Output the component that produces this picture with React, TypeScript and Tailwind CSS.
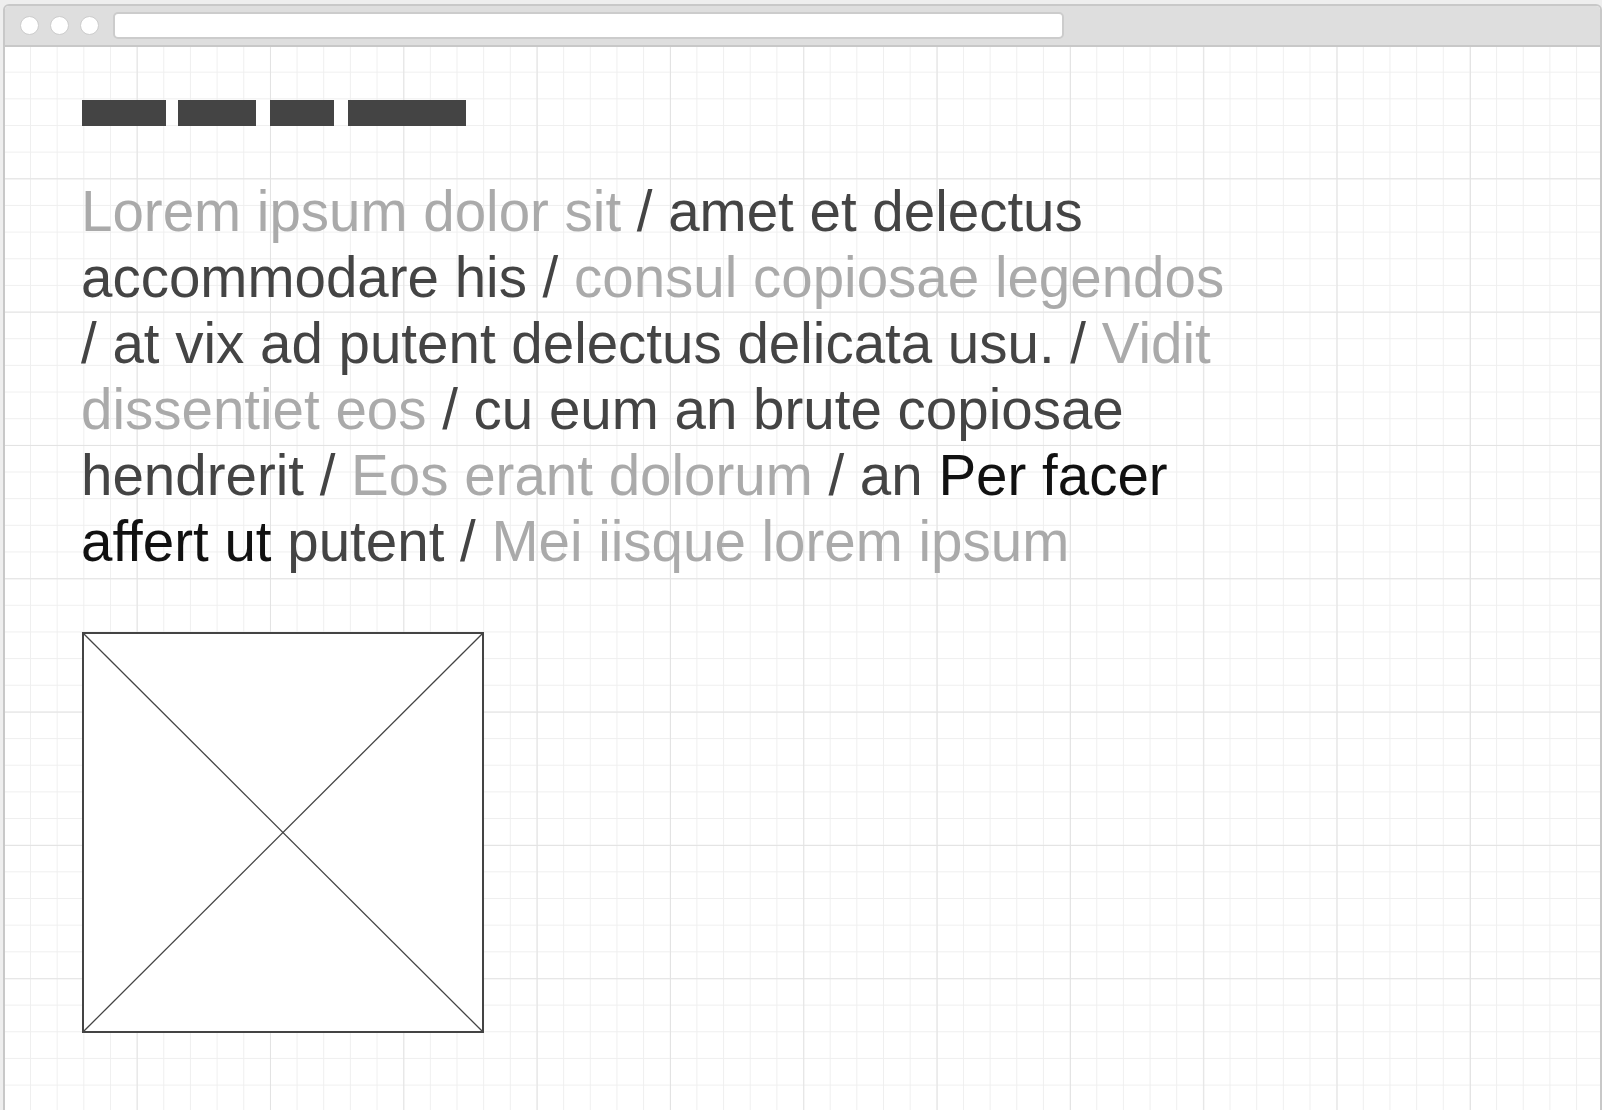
import React from "react";

const Gray = ({ children }: { children: React.ReactNode }) => (
  <span className="text-[#aaaaaa]">{children}</span>
);
const Dark = ({ children }: { children: React.ReactNode }) => (
  <span className="text-[#444444]">{children}</span>
);
const Black = ({ children }: { children: React.ReactNode }) => (
  <span className="text-[#111111]">{children}</span>
);

export default function App() {
  return (
    <div className="w-full h-[1110px] bg-[#eeeeee] pt-[4px] pl-[3px] overflow-hidden font-['Liberation_Sans',Arial,sans-serif]">
      <div className="h-[1120px] border-2 border-[#c8c8c8] rounded-t-[6px] bg-white flex flex-col overflow-hidden">
        {/* title bar */}
        <div className="h-[41px] shrink-0 bg-[#dedede] border-b-2 border-[#c8c8c8] flex items-center pl-[15px] gap-[11px]">
          <div className="w-[19px] h-[19px] rounded-full bg-white border border-[#cccccc]" />
          <div className="w-[19px] h-[19px] rounded-full bg-white border border-[#cccccc]" />
          <div className="w-[19px] h-[19px] rounded-full bg-white border border-[#cccccc]" />
          <div className="ml-[3px] w-[951px] h-[27px] rounded-[5px] bg-white border-2 border-[#cccccc]" />
        </div>
        {/* content */}
        <div className="flex-1 pt-[53px] pl-[77px] bg-white bg-[linear-gradient(to_right,#e3e3e3_1.3px,transparent_1.3px),linear-gradient(to_bottom,#e3e3e3_1.3px,transparent_1.3px),linear-gradient(to_right,#efefef_1.3px,transparent_1.3px),linear-gradient(to_bottom,#efefef_1.3px,transparent_1.3px)] bg-[size:133.333px_133.333px,133.333px_133.333px,26.667px_26.667px,26.667px_26.667px] bg-[position:-1.67px_-2px]">
          <div className="flex items-start h-[26px]">
            <div className="w-[84px] h-[26px] bg-[#444444]" />
            <div className="ml-[12px] w-[78px] h-[26px] bg-[#444444]" />
            <div className="ml-[14px] w-[64px] h-[26px] bg-[#444444]" />
            <div className="ml-[14px] w-[118px] h-[26px] bg-[#444444]" />
          </div>
          <p className="mt-[53px] -ml-[1px] w-[1166px] text-[56.5px] leading-[66px]">
            <Gray>Lorem ipsum dolor sit</Gray>
            <Dark> / amet et delectus accommodare his / </Dark>
            <Gray>consul copiosae legendos</Gray>
            <Dark> / at vix ad putent delectus delicata usu. / </Dark>
            <Gray>Vidit dissentiet eos</Gray>
            <Dark> / cu eum an brute copiosae hendrerit / </Dark>
            <Gray>Eos erant dolorum</Gray>
            <Dark> / an </Dark>
            <Black>Per facer affert ut</Black>
            <Dark> putent / </Dark>
            <Gray>Mei iisque lorem ipsum</Gray>
          </p>
          <div className="mt-[57px] w-[402px] h-[401px] border-2 border-[#444444] bg-white">
            <svg width="398" height="397" viewBox="0 0 398 397" className="block">
              <line x1="0" y1="0" x2="398" y2="397" stroke="#444444" strokeWidth="1.3" />
              <line x1="398" y1="0" x2="0" y2="397" stroke="#444444" strokeWidth="1.3" />
            </svg>
          </div>
        </div>
      </div>
    </div>
  );
}
